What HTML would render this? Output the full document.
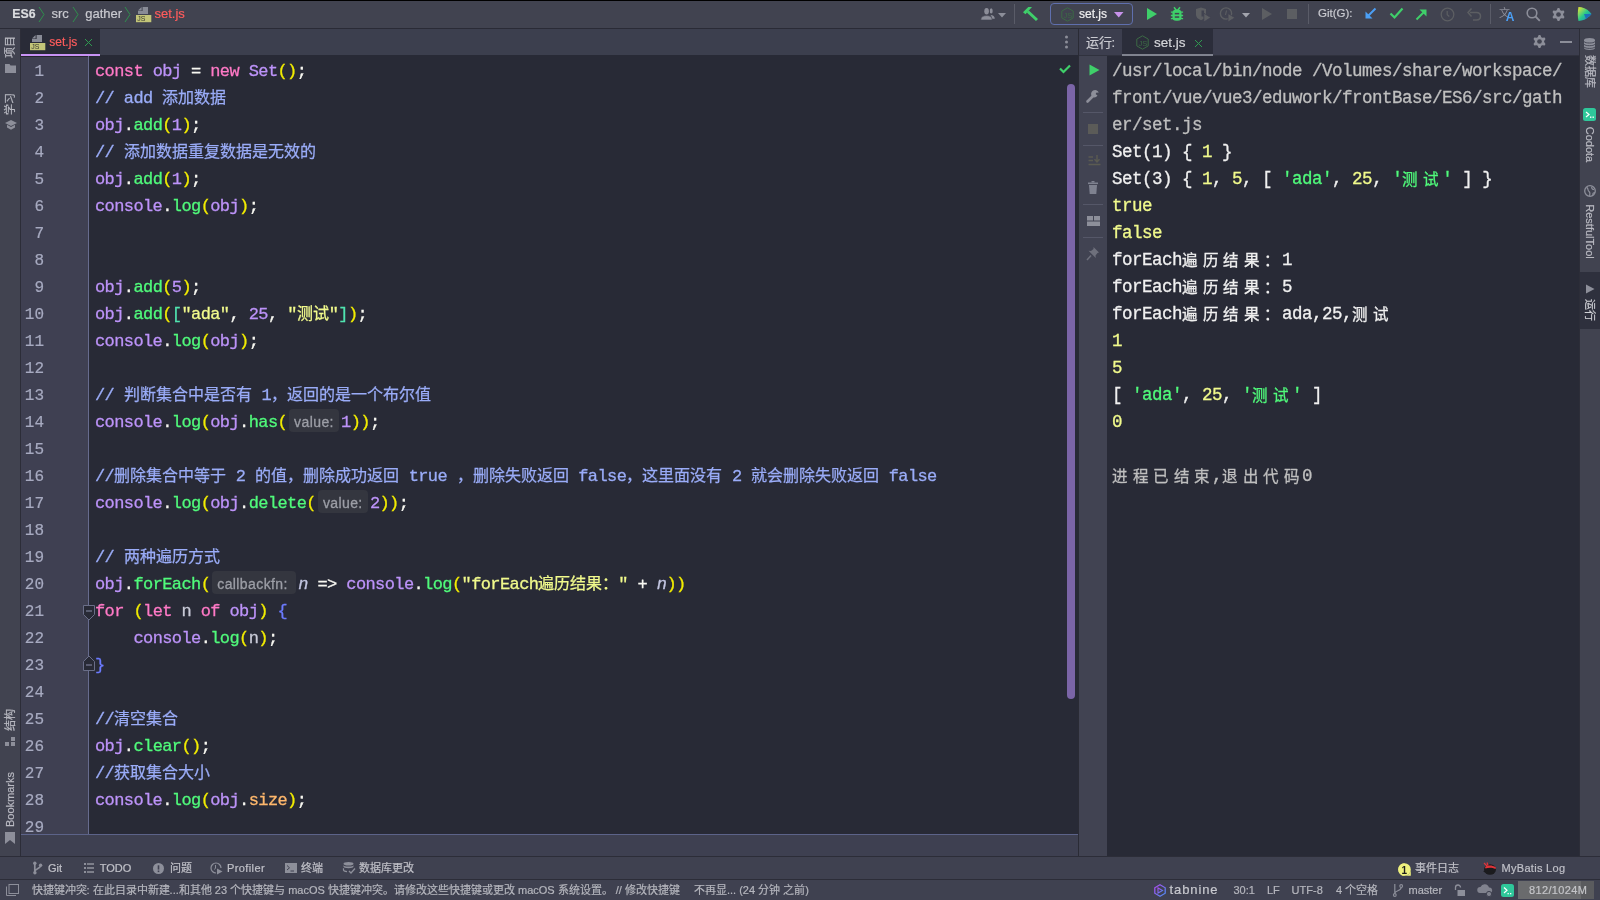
<!DOCTYPE html>
<html lang="zh-CN">
<head>
<meta charset="utf-8">
<style>
*{box-sizing:border-box;margin:0;padding:0}
html,body{width:1600px;height:900px;overflow:hidden;background:#3e4050}
body{position:relative;font-family:"Liberation Sans",sans-serif;color:#c8c9d0}
.a{position:absolute}
.mono{font-family:"Liberation Mono",monospace}
/* panels */
#topline{left:0;top:0;width:1600px;height:1px;background:#000}
#title{left:0;top:1px;width:1600px;height:27px;background:#414350}
#titleb{left:0;top:28px;width:1600px;height:1px;background:#2a2b36}
#lstrip{left:0;top:29px;width:20px;height:827px;background:#414350}
#lstripb{left:20px;top:29px;width:1px;height:827px;background:#2c2d38}
#tabbar{left:21px;top:29px;width:1057px;height:26px;background:#3c3f4e}
#tab{left:21px;top:29px;width:79px;height:25px;background:#292b37}
#tabul{left:21px;top:54px;width:79px;height:2px;background:#c893f5}
#editor{left:21px;top:55px;width:1057px;height:779px;background:#282a36}
#gutter{left:21px;top:56px;width:67px;height:778px;background:#3f4052;border-top:1px solid #25262f}
#gutterl{left:88px;top:56px;width:1px;height:778px;background:#676c8e}
#hscroll{left:21px;top:834px;width:1057px;height:22px;background:#3e4051}
#hscrollb{left:21px;top:834px;width:1057px;height:1px;background:#5c6389}
#vdiv{left:1078px;top:29px;width:1px;height:827px;background:#2a2b35}
#runhead{left:1079px;top:29px;width:500px;height:26px;background:#3c3e4e}
#runheadb{left:1079px;top:55px;width:500px;height:1px;background:#30323e}
#runtool{left:1079px;top:56px;width:28px;height:800px;background:#414352}
#console{left:1107px;top:56px;width:472px;height:800px;background:#282a36}
#rstripb{left:1579px;top:29px;width:1px;height:827px;background:#2c2d38}
#rstrip{left:1580px;top:29px;width:20px;height:827px;background:#414350}
#bbarb{left:0;top:856px;width:1600px;height:1px;background:#2c2d38}
#bbar{left:0;top:857px;width:1600px;height:22px;background:#3f4150}
#sbarb{left:0;top:879px;width:1600px;height:1px;background:#2c2d38}
#sbar{left:0;top:880px;width:1600px;height:20px;background:#3f4150}

/* code */
#code{left:95px;top:58px;width:980px;font-size:17px;letter-spacing:-0.6px;line-height:27px;color:#f8f8f2;white-space:pre;-webkit-text-stroke:0.3px currentColor}
.ln{height:27px;white-space:pre}
.cj{display:inline-block;white-space:nowrap;letter-spacing:0;font-size:16px;-webkit-text-stroke:0.25px currentColor}
.cj2{display:inline-block;white-space:nowrap;font-size:15.5px;letter-spacing:4.5px;vertical-align:-1px;-webkit-text-stroke:0.3px currentColor}
.k{color:#ff79c6}.v{color:#bd93f9}.f{color:#50fa7b}.p{color:#f2ec00}.w{color:#f8f8f2}
.c{color:#9aacf8}.s{color:#f1fa8c}.n{color:#bd93f9}.b{color:#50e3b0}.br{color:#6c7bff}.o{color:#ffb86c}
.i{color:#c3c6e2;font-style:italic}.g{color:#c9cbd8}
.hint{display:inline-block;position:relative;height:1px}
.hp{position:absolute;left:2px;right:2px;top:-17.5px;height:23px;background:#34363f;border-radius:4px;color:#9c9ea6;font-family:"Liberation Sans",sans-serif;font-size:14px;line-height:26px;padding-left:5px;letter-spacing:0.4px}
#nums{left:20px;top:58.5px;width:24px;font-size:16px;-webkit-text-stroke:0.2px currentColor;line-height:27px;color:#a7aac0;text-align:right}
.num{height:27px}
/* console */
#con{left:1112px;top:57.5px;width:470px;font-size:17.5px;letter-spacing:-0.5px;-webkit-text-stroke:0.3px currentColor;line-height:27px;white-space:pre}
.cl{height:27px}
.cg{color:#bfbfbf}.cw{color:#f0f0f0}.cy{color:#f1fa8c}.cs{color:#50fa7b}
.t{line-height:1;white-space:pre;-webkit-text-stroke:0.2px currentColor}
svg{overflow:visible}
</style>
</head>
<body>
<div id="root" style="position:absolute;left:0;top:0;width:1600px;height:900px;will-change:transform">
<div class="a" id="topline"></div>
<div class="a" id="title"></div>
<div class="a" id="titleb"></div>
<div class="a" id="lstrip"></div>
<div class="a" id="lstripb"></div>
<div class="a" id="tabbar"></div>
<div class="a" id="tab"></div>
<div class="a" id="editor"></div>
<div class="a" id="gutter"></div>
<div class="a" id="gutterl"></div>
<div class="a" id="tabul"></div>
<div class="a" id="hscroll"></div>
<div class="a" id="hscrollb"></div>
<div class="a" id="vdiv"></div>
<div class="a" id="runhead"></div>
<div class="a" id="runheadb"></div>
<div class="a" id="runtool"></div>
<div class="a" id="console"></div>
<div class="a" id="rstripb"></div>
<div class="a" id="rstrip"></div>
<div class="a" id="bbarb"></div>
<div class="a" id="bbar"></div>
<div class="a" id="sbarb"></div>
<div class="a" id="sbar"></div>
<div class="a mono" id="code"><div class="ln"><span class="k">const</span><span class="w"> </span><span class="v">obj</span><span class="w"> = </span><span class="k">new</span><span class="w"> </span><span class="v">Set</span><span class="p">()</span><span class="w">;</span></div><div class="ln"><span class="c">// add <span class="cj" style="width:64px">添加数据</span></span></div><div class="ln"><span class="v">obj</span><span class="w">.</span><span class="f">add</span><span class="p">(</span><span class="n">1</span><span class="p">)</span><span class="w">;</span></div><div class="ln"><span class="c">// <span class="cj" style="width:192px">添加数据重复数据是无效的</span></span></div><div class="ln"><span class="v">obj</span><span class="w">.</span><span class="f">add</span><span class="p">(</span><span class="n">1</span><span class="p">)</span><span class="w">;</span></div><div class="ln"><span class="v">console</span><span class="w">.</span><span class="f">log</span><span class="p">(</span><span class="v">obj</span><span class="p">)</span><span class="w">;</span></div><div class="ln">&#8203;</div><div class="ln">&#8203;</div><div class="ln"><span class="v">obj</span><span class="w">.</span><span class="f">add</span><span class="p">(</span><span class="n">5</span><span class="p">)</span><span class="w">;</span></div><div class="ln"><span class="v">obj</span><span class="w">.</span><span class="f">add</span><span class="p">(</span><span class="b">[</span><span class="s">&quot;ada&quot;</span><span class="w">, </span><span class="n">25</span><span class="w">, </span><span class="s">&quot;<span class="cj" style="width:32px">测试</span>&quot;</span><span class="b">]</span><span class="p">)</span><span class="w">;</span></div><div class="ln"><span class="v">console</span><span class="w">.</span><span class="f">log</span><span class="p">(</span><span class="v">obj</span><span class="p">)</span><span class="w">;</span></div><div class="ln">&#8203;</div><div class="ln"><span class="c">// <span class="cj" style="width:128px">判断集合中是否有</span> 1<span class="cj" style="width:160px">，返回的是一个布尔值</span></span></div><div class="ln"><span class="v">console</span><span class="w">.</span><span class="f">log</span><span class="p">(</span><span class="v">obj</span><span class="w">.</span><span class="f">has</span><span class="p">(</span><span class="hint" style="width:54px"><span class="hp">value:</span></span><span class="n">1</span><span class="p">))</span><span class="w">;</span></div><div class="ln">&#8203;</div><div class="ln"><span class="c">//<span class="cj" style="width:112px">删除集合中等于</span> 2 <span class="cj" style="width:144px">的值，删除成功返回</span> true <span class="cj" style="width:112px">，删除失败返回</span> false<span class="cj" style="width:96px">，这里面没有</span> 2 <span class="cj" style="width:128px">就会删除失败返回</span> false</span></div><div class="ln"><span class="v">console</span><span class="w">.</span><span class="f">log</span><span class="p">(</span><span class="v">obj</span><span class="w">.</span><span class="f">delete</span><span class="p">(</span><span class="hint" style="width:54px"><span class="hp">value:</span></span><span class="n">2</span><span class="p">))</span><span class="w">;</span></div><div class="ln">&#8203;</div><div class="ln"><span class="c">// <span class="cj" style="width:96px">两种遍历方式</span></span></div><div class="ln"><span class="v">obj</span><span class="w">.</span><span class="f">forEach</span><span class="p">(</span><span class="hint" style="width:88px"><span class="hp">callbackfn:</span></span><span class="i">n</span><span class="w"> =&gt; </span><span class="v">console</span><span class="w">.</span><span class="f">log</span><span class="p">(</span><span class="s">&quot;forEach<span class="cj" style="width:80px">遍历结果：</span>&quot;</span><span class="w"> + </span><span class="i">n</span><span class="p">))</span></div><div class="ln"><span class="k">for</span><span class="w"> </span><span class="p">(</span><span class="k">let</span><span class="w"> </span><span class="g">n</span><span class="w"> </span><span class="k">of</span><span class="w"> </span><span class="v">obj</span><span class="p">)</span><span class="w"> </span><span class="br">{</span></div><div class="ln"><span class="w">    </span><span class="v">console</span><span class="w">.</span><span class="f">log</span><span class="p">(</span><span class="g">n</span><span class="p">)</span><span class="w">;</span></div><div class="ln"><span class="br">}</span></div><div class="ln">&#8203;</div><div class="ln"><span class="c">//<span class="cj" style="width:64px">清空集合</span></span></div><div class="ln"><span class="v">obj</span><span class="w">.</span><span class="f">clear</span><span class="p">()</span><span class="w">;</span></div><div class="ln"><span class="c">//<span class="cj" style="width:96px">获取集合大小</span></span></div><div class="ln"><span class="v">console</span><span class="w">.</span><span class="f">log</span><span class="p">(</span><span class="v">obj</span><span class="w">.</span><span class="o">size</span><span class="p">)</span><span class="w">;</span></div><div class="ln">&#8203;</div></div>
<div class="a mono" id="nums"><div class="num">1</div><div class="num">2</div><div class="num">3</div><div class="num">4</div><div class="num">5</div><div class="num">6</div><div class="num">7</div><div class="num">8</div><div class="num">9</div><div class="num">10</div><div class="num">11</div><div class="num">12</div><div class="num">13</div><div class="num">14</div><div class="num">15</div><div class="num">16</div><div class="num">17</div><div class="num">18</div><div class="num">19</div><div class="num">20</div><div class="num">21</div><div class="num">22</div><div class="num">23</div><div class="num">24</div><div class="num">25</div><div class="num">26</div><div class="num">27</div><div class="num">28</div><div class="num">29</div></div>
<div class="a mono" id="con"><div class="cl"><span class="cg">/usr/local/bin/node /Volumes/share/workspace/</span></div><div class="cl"><span class="cg">front/vue/vue3/eduwork/frontBase/ES6/src/gath</span></div><div class="cl"><span class="cg">er/set.js</span></div><div class="cl"><span class="cw">Set(1) { </span><span class="cy">1</span><span class="cw"> }</span></div><div class="cl"><span class="cw">Set(3) { </span><span class="cy">1</span><span class="cw">, </span><span class="cy">5</span><span class="cw">, [ </span><span class="cs">&#x27;ada&#x27;</span><span class="cw">, </span><span class="cy">25</span><span class="cw">, </span><span class="cs">&#x27;<span class="cj2" style="width:40px">测试</span>&#x27;</span><span class="cw"> ] }</span></div><div class="cl"><span class="cy">true</span></div><div class="cl"><span class="cy">false</span></div><div class="cl"><span class="cw">forEach<span class="cj2" style="width:100px">遍历结果：</span>1</span></div><div class="cl"><span class="cw">forEach<span class="cj2" style="width:100px">遍历结果：</span>5</span></div><div class="cl"><span class="cw">forEach<span class="cj2" style="width:100px">遍历结果：</span>ada,25,<span class="cj2" style="width:40px">测试</span></span></div><div class="cl"><span class="cy">1</span></div><div class="cl"><span class="cy">5</span></div><div class="cl"><span class="cw">[ </span><span class="cs">&#x27;ada&#x27;</span><span class="cw">, </span><span class="cy">25</span><span class="cw">, </span><span class="cs">&#x27;<span class="cj2" style="width:40px">测试</span>&#x27;</span><span class="cw"> ]</span></div><div class="cl"><span class="cy">0</span></div><div class="cl">&#8203;</div><div class="cl"><span class="cg"><span class="cj2" style="width:100px">进程已结束</span>,<span class="cj2" style="width:80px">退出代码</span>0</span></div></div>
<div class="a t " style="left:12.3px;top:7.89px;font-size:12.3px;color:#dcdde0;font-weight:bold;">ES6</div>
<svg class="a" style="left:38px;top:6px;" width="8" height="17" viewBox="0 0 8 17"><path d="M1 1L6 8.5L1 16" fill="none" stroke="#2f8f4d" stroke-width="1"/></svg>
<svg class="a" style="left:72px;top:6px;" width="8" height="17" viewBox="0 0 8 17"><path d="M1 1L6 8.5L1 16" fill="none" stroke="#2f8f4d" stroke-width="1"/></svg>
<svg class="a" style="left:124px;top:6px;" width="8" height="17" viewBox="0 0 8 17"><path d="M1 1L6 8.5L1 16" fill="none" stroke="#2f8f4d" stroke-width="1"/></svg>
<div class="a t " style="left:51.4px;top:7.30px;font-size:13px;color:#c9cad0;font-weight:normal;">src</div>
<div class="a t " style="left:85.3px;top:7.30px;font-size:13px;color:#c9cad0;font-weight:normal;">gather</div>
<svg class="a" style="left:136px;top:6.8px;" width="16" height="16" viewBox="0 0 16 16"><path d="M6.6 0H12V7H2V4H6.6Z" fill="#888b96"/><path d="M2 3.4L5.6 0V3.4Z" fill="#888b96"/><rect x="0" y="8" width="15.3" height="7.2" fill="#c3c578"/><text x="1.3" y="14" font-family="Liberation Sans" font-size="7" fill="#3a3b30">JS</text></svg>
<div class="a t " style="left:154.5px;top:7.30px;font-size:13px;color:#ff5c5c;font-weight:normal;">set.js</div>
<svg class="a" style="left:980px;top:7px;" width="16" height="14" viewBox="0 0 16 14"><ellipse cx="11.2" cy="3.9" rx="1.5" ry="2.6" fill="#8c8e99"/><path d="M10.5 8C13 8.3 14.8 9.3 14.8 11.8H12C12 10 11.3 8.8 10.5 8Z" fill="#8c8e99"/><ellipse cx="6.6" cy="4.3" rx="2.9" ry="3.5" fill="#414350"/><ellipse cx="6.6" cy="4.3" rx="2.3" ry="3.2" fill="#8c8e99"/><path d="M0.8 13C0.8 9.8 3.5 8.6 6.6 8.6S12.2 9.8 12.2 13Z" fill="#8c8e99" stroke="#414350" stroke-width="0.6"/></svg>
<svg class="a" style="left:998px;top:12.5px;" width="8" height="5" viewBox="0 0 8 5"><path d="M0 0H8L4 4.5Z" fill="#8c8e99"/></svg>
<div class="a" style="left:1014px;top:4px;width:1px;height:20px;background:#5a5c68;"></div>
<svg class="a" style="left:1022px;top:6px;" width="17" height="16" viewBox="0 0 17 16"><path d="M1 6.3L6.3 1H10L3.5 8.3Z" fill="#3fcf6a"/><path d="M5.8 5.5L15 14" stroke="#3fcf6a" stroke-width="3"/></svg>
<div class="a" style="left:1050px;top:3px;width:83px;height:22px;border:1px solid #5f6fad;border-radius:4px"></div>
<svg class="a" style="left:1060.5px;top:6.5px;" width="13" height="15" viewBox="0 0 13 15"><path d="M6.5 0.8L12.2 4.1V10.9L6.5 14.2L0.8 10.9V4.1Z" fill="none" stroke="#3c6a45" stroke-width="1"/><text x="2.6" y="10.8" font-family="Liberation Sans" font-size="7.5" fill="#3c6a45">JS</text></svg>
<div class="a t " style="left:1079px;top:8.44px;font-size:12px;color:#f0f0f0;font-weight:normal;-webkit-text-stroke:0.2px #f0f0f0">set.js</div>
<svg class="a" style="left:1114px;top:12px;" width="10" height="6" viewBox="0 0 10 6"><path d="M0 0H9.5L4.75 5.5Z" fill="#c792ea"/></svg>
<svg class="a" style="left:1146px;top:7px;" width="12" height="14" viewBox="0 0 12 14"><path d="M1 1L11 7L1 13Z" fill="#3fcf6a"/></svg>
<svg class="a" style="left:1170px;top:6px;" width="14" height="16" viewBox="0 0 14 16"><path d="M4 1.3L6.3 4.2M10 1.3L7.7 4.2" stroke="#3fcf6a" stroke-width="1.5"/><rect x="2.5" y="3.6" width="9" height="11.2" rx="3.6" fill="#3fcf6a"/><path d="M0.9 6.1H13.1M0.9 9.5H13.1M0.9 12.6H13.1" stroke="#3fcf6a" stroke-width="1.4"/><rect x="4.8" y="6.9" width="4.4" height="1.5" fill="#414350"/><rect x="4.8" y="10.3" width="4.4" height="1.5" fill="#414350"/></svg>
<svg class="a" style="left:1195px;top:7px;" width="17" height="16" viewBox="0 0 17 16"><path d="M1 2L6 0.6L11 2V7.5C11 10.5 8.5 12.3 6 13.2C3.5 12.3 1 10.5 1 7.5Z" fill="#5c5e62"/><path d="M6.5 3.5H9V9.5H6.5Z" fill="#414350"/><path d="M8.8 6.2L15.8 10.6L8.8 15Z" fill="#5c5e62" stroke="#414350" stroke-width="0.8"/></svg>
<svg class="a" style="left:1219px;top:7px;" width="17" height="16" viewBox="0 0 17 16"><circle cx="7" cy="6.5" r="5.6" fill="none" stroke="#5c5e62" stroke-width="1.4"/><path d="M7.5 3.5L6.5 8" stroke="#5c5e62" stroke-width="1.1" fill="none"/><path d="M9 6.5L16 10.75L9 15Z" fill="#5c5e62" stroke="#414350" stroke-width="0.8"/></svg>
<svg class="a" style="left:1242px;top:12.8px;" width="8" height="5" viewBox="0 0 8 5"><path d="M0 0H8L4 4.5Z" fill="#a3a5ae"/></svg>
<svg class="a" style="left:1261px;top:7px;" width="12" height="14" viewBox="0 0 12 14"><path d="M1 1L11 7L1 13Z" fill="#5c5e62"/></svg>
<div class="a" style="left:1287px;top:9px;width:10px;height:10px;background:#5c5e62;"></div>
<div class="a" style="left:1308px;top:4px;width:1px;height:20px;background:#5a5c68;"></div>
<div class="a t " style="left:1318px;top:7.97px;font-size:11.5px;color:#c9cad0;font-weight:normal;">Git(G):</div>
<svg class="a" style="left:1364px;top:7px;" width="13" height="13" viewBox="0 0 13 13"><path d="M11.5 1.5L3 10" stroke="#4b9ff5" stroke-width="2"/><path d="M1.5 4.5V11.5H8.5Z" fill="#4b9ff5"/></svg>
<svg class="a" style="left:1389px;top:7px;" width="15" height="13" viewBox="0 0 15 13"><path d="M1.5 6.5L5.5 10.5L13.5 1.5" fill="none" stroke="#3fcf6a" stroke-width="2.2"/></svg>
<svg class="a" style="left:1415px;top:8px;" width="13" height="13" viewBox="0 0 13 13"><path d="M1.5 11.5L10 3" stroke="#3fcf6a" stroke-width="2"/><path d="M4.5 1.5H11.5V8.5Z" fill="#3fcf6a"/></svg>
<svg class="a" style="left:1440px;top:7px;" width="15" height="15" viewBox="0 0 15 15"><circle cx="7.5" cy="7.5" r="6.3" fill="none" stroke="#5c5e62" stroke-width="1.3"/><path d="M7.2 4V7.8L9.3 9.5" stroke="#5c5e62" stroke-width="1.2" fill="none"/></svg>
<svg class="a" style="left:1467px;top:7px;" width="15" height="14" viewBox="0 0 15 14"><path d="M3 5.5H9.5C12 5.5 13.5 7.2 13.5 9.3S12 13 9.5 13H6" fill="none" stroke="#5c5e62" stroke-width="1.5"/><path d="M4.5 1.5L1 5.5L4.5 9.5" fill="none" stroke="#5c5e62" stroke-width="1.5"/></svg>
<div class="a" style="left:1490px;top:4px;width:1px;height:20px;background:#5a5c68;"></div>
<svg class="a" style="left:1498px;top:6px;" width="18" height="16" viewBox="0 0 18 16"><text x="0.5" y="11" font-size="11" fill="#8c8e99">文</text><text x="7.8" y="15.2" font-family="Liberation Sans" font-weight="bold" font-size="12" fill="#4b9ff5">A</text></svg>
<svg class="a" style="left:1526px;top:7px;" width="15" height="15" viewBox="0 0 15 15"><circle cx="6" cy="6" r="4.8" fill="none" stroke="#8c8e99" stroke-width="1.6"/><path d="M9.5 9.5L13.8 13.8" stroke="#8c8e99" stroke-width="1.8"/></svg>
<svg class="a" style="left:1552px;top:7.5px;" width="13" height="13" viewBox="0 0 13 13"><path d="M5.65 0.06L7.35 0.06L8.29 2.18L9.35 2.79L11.66 2.54L12.51 4.01L11.14 5.89L11.14 7.11L12.51 8.99L11.66 10.46L9.35 10.21L8.29 10.82L7.35 12.94L5.65 12.94L4.71 10.82L3.65 10.21L1.34 10.46L0.49 8.99L1.86 7.11L1.86 5.89L0.49 4.01L1.34 2.54L3.65 2.79L4.71 2.18Z" fill="#8c8e99"/><circle cx="6.5" cy="6.5" r="2.34" fill="#414350"/></svg>
<svg class="a" style="left:1577px;top:6px;" width="16" height="16" viewBox="0 0 16 16"><defs><linearGradient id="lg" x1="0" y1="0" x2="1" y2="1"><stop offset="0" stop-color="#f4e830"/><stop offset="0.5" stop-color="#29c98a"/><stop offset="1" stop-color="#1f6fd8"/></linearGradient></defs><path d="M1.5 1C6 1 11 3 14.5 8C11 13 6 15 1.5 15C0.5 10.5 0.5 5.5 1.5 1Z" fill="url(#lg)"/><path d="M7 8L14.5 8L9 13Z" fill="#1d5fc0" opacity="0.8"/></svg>
<svg class="a" style="left:30px;top:35px;" width="16" height="16" viewBox="0 0 16 16"><path d="M6.6 0H12V7H2V4H6.6Z" fill="#888b96"/><path d="M2 3.4L5.6 0V3.4Z" fill="#888b96"/><rect x="0" y="8" width="15.3" height="7.2" fill="#c3c578"/><text x="1.3" y="14" font-family="Liberation Sans" font-size="7" fill="#3a3b30">JS</text></svg>
<div class="a t " style="left:49.3px;top:35.84px;font-size:12px;color:#ff5c5c;font-weight:normal;">set.js</div>
<svg class="a" style="left:83.5px;top:37.5px;" width="9" height="9" viewBox="0 0 9 9"><path d="M1 1L8 8M8 1L1 8" stroke="#2f9a50" stroke-width="1"/></svg>
<svg class="a" style="left:1064px;top:35px;" width="5" height="14" viewBox="0 0 5 14"><circle cx="2.5" cy="2" r="1.5" fill="#8c8e99"/><circle cx="2.5" cy="7" r="1.5" fill="#8c8e99"/><circle cx="2.5" cy="12" r="1.5" fill="#8c8e99"/></svg>
<div class="a t " style="left:1085.6px;top:36.00px;font-size:13px;color:#c9cad0;font-weight:normal;">运行:</div>
<div class="a" style="left:1122px;top:29px;width:91px;height:25px;background:#2b2d3a;"></div>
<div class="a" style="left:1122px;top:54px;width:91px;height:2px;background:#80838f;"></div>
<svg class="a" style="left:1135.5px;top:34.5px;" width="13" height="15" viewBox="0 0 13 15"><path d="M6.5 0.8L12.2 4.1V10.9L6.5 14.2L0.8 10.9V4.1Z" fill="none" stroke="#3c6a45" stroke-width="1"/><text x="2.6" y="10.8" font-family="Liberation Sans" font-size="7.5" fill="#3c6a45">JS</text></svg>
<div class="a t " style="left:1154px;top:35.57px;font-size:13.5px;color:#d4d5d9;font-weight:normal;">set.js</div>
<svg class="a" style="left:1193.5px;top:38.5px;" width="9" height="9" viewBox="0 0 9 9"><path d="M1 1L8 8M8 1L1 8" stroke="#2f9a50" stroke-width="1"/></svg>
<svg class="a" style="left:1533.2px;top:35.2px;" width="13" height="13" viewBox="0 0 13 13"><path d="M5.65 0.06L7.35 0.06L8.29 2.18L9.35 2.79L11.66 2.54L12.51 4.01L11.14 5.89L11.14 7.11L12.51 8.99L11.66 10.46L9.35 10.21L8.29 10.82L7.35 12.94L5.65 12.94L4.71 10.82L3.65 10.21L1.34 10.46L0.49 8.99L1.86 7.11L1.86 5.89L0.49 4.01L1.34 2.54L3.65 2.79L4.71 2.18Z" fill="#8c8e99"/><circle cx="6.5" cy="6.5" r="2.34" fill="#414350"/></svg>
<div class="a" style="left:1560px;top:41px;width:12px;height:2px;background:#8c8e99;"></div>
<div class="a t" style="left:0px;top:42px;width:21px;height:11px;line-height:11px;font-size:11px;color:#b9bac2;text-align:center;transform:rotate(-90deg)">项目</div>
<svg class="a" style="left:5px;top:64px;" width="11" height="9" viewBox="0 0 11 9"><path d="M0 0H4.5L5.5 1.5H11V9H0Z" fill="#8d8f9a"/></svg>
<div class="a t" style="left:0px;top:99px;width:21px;height:11px;line-height:11px;font-size:11px;color:#b9bac2;text-align:center;transform:rotate(-90deg)">学习</div>
<svg class="a" style="left:4.5px;top:120px;" width="12" height="10" viewBox="0 0 12 10"><path d="M6 0L12 3L6 6L0 3Z" fill="#8d8f9a"/><path d="M2 4.8V7.5L6 9.8L10 7.5V4.8L6 7Z" fill="#8d8f9a"/></svg>
<div class="a t" style="left:0px;top:715px;width:21px;height:11px;line-height:11px;font-size:11px;color:#b9bac2;text-align:center;transform:rotate(-90deg)">结构</div>
<svg class="a" style="left:5px;top:737px;" width="10" height="9" viewBox="0 0 10 9"><rect x="0" y="5" width="4" height="4" fill="#8d8f9a"/><rect x="6" y="5" width="4" height="4" fill="#8d8f9a"/><rect x="6" y="0" width="4" height="4" fill="#8d8f9a"/></svg>
<div class="a t" style="left:-18px;top:793.5px;width:57px;height:11px;line-height:11px;font-size:11px;color:#b9bac2;text-align:center;transform:rotate(-90deg)">Bookmarks</div>
<svg class="a" style="left:5px;top:832px;" width="10" height="12" viewBox="0 0 10 12"><path d="M0 0H10V12L5 8L0 12Z" fill="#8d8f9a"/></svg>
<svg class="a" style="left:1584px;top:38px;" width="11" height="12" viewBox="0 0 11 12"><path d="M0 2C0 0.9 2.5 0 5.5 0S11 0.9 11 2V10C11 11.1 8.5 12 5.5 12S0 11.1 0 10Z" fill="#8d8f9a"/><path d="M0 3.6C1 4.6 3 5 5.5 5S10 4.6 11 3.6M0 6.3C1 7.3 3 7.7 5.5 7.7S10 7.3 11 6.3M0 9C1 10 3 10.4 5.5 10.4S10 10 11 9" fill="none" stroke="#414350" stroke-width="0.9"/></svg>
<div class="a t" style="left:1572.8px;top:66px;width:33px;height:11px;line-height:11px;font-size:11px;color:#b9bac2;text-align:center;transform:rotate(90deg)">数据库</div>
<svg class="a" style="left:1583px;top:108px;" width="13" height="13" viewBox="0 0 13 13"><rect x="0" y="0" width="13" height="13" rx="2.5" fill="#2fc79a"/><path d="M3 4L6 6.5L3 9" fill="none" stroke="#fff" stroke-width="1.2"/><rect x="7" y="8.5" width="1.4" height="1.4" fill="#fff"/><rect x="9.5" y="8.5" width="1.4" height="1.4" fill="#fff"/></svg>
<div class="a t" style="left:1570.3px;top:138.5px;width:38px;height:11px;line-height:11px;font-size:11px;color:#b9bac2;text-align:center;transform:rotate(90deg)">Codota</div>
<svg class="a" style="left:1584px;top:185px;" width="12" height="12" viewBox="0 0 12 12"><circle cx="6" cy="6" r="5.3" fill="none" stroke="#8d8f9a" stroke-width="1.3"/><path d="M3 2.5C4.5 4 3.5 5.5 5 6.5S6 9 5.5 11M8 1.5C7 3 8.5 4.5 10 4.5M11 7.5C9.5 7.5 8.5 8.5 9 10" fill="none" stroke="#8d8f9a" stroke-width="1.2"/></svg>
<div class="a t" style="left:1560.55px;top:225.95px;width:57.5px;height:11px;line-height:11px;font-size:11px;color:#b9bac2;text-align:center;transform:rotate(90deg)">RestfulTool</div>
<div class="a" style="left:1580px;top:272px;width:20px;height:57px;background:#2e303d;"></div>
<svg class="a" style="left:1585px;top:284px;" width="10" height="10" viewBox="0 0 10 10"><path d="M1 0.5L9.5 5L1 9.5Z" fill="#8d8f9a"/></svg>
<div class="a t" style="left:1578.55px;top:303.95px;width:21.5px;height:11px;line-height:11px;font-size:11px;color:#d0d1d6;text-align:center;transform:rotate(90deg)">运行</div>
<svg class="a" style="left:1088.5px;top:64px;" width="11" height="12" viewBox="0 0 11 12"><path d="M0.5 0.5L10.5 6L0.5 11.5Z" fill="#3fcf6a"/></svg>
<svg class="a" style="left:1086px;top:88.5px;" width="14" height="14" viewBox="0 0 14 14"><path d="M1.5 12.5L7 7" stroke="#8d8f9a" stroke-width="2.6" stroke-linecap="round"/><path d="M6 7.5A4 4 0 1 1 12.8 3.5L10 3.8L9.8 5.2L11.5 6.5A4 4 0 0 1 6 7.5Z" fill="#8d8f9a"/></svg>
<div class="a" style="left:1083px;top:112px;width:20px;height:1px;background:#555768;"></div>
<div class="a" style="left:1083px;top:145px;width:20px;height:1px;background:#555768;"></div>
<div class="a" style="left:1083px;top:204px;width:20px;height:1px;background:#555768;"></div>
<div class="a" style="left:1083px;top:237px;width:20px;height:1px;background:#555768;"></div>
<div class="a" style="left:1088px;top:124px;width:10px;height:10px;background:#5b5b58;"></div>
<svg class="a" style="left:1087.5px;top:155px;" width="13" height="12" viewBox="0 0 13 12"><path d="M0.5 2H5M0.5 5.5H5M0.5 9.5H12.5" stroke="#5b5b52" stroke-width="1.4"/><path d="M9 0V6.5M6.5 4.3L9 7L11.5 4.3" fill="none" stroke="#5b5b52" stroke-width="1.4"/></svg>
<svg class="a" style="left:1088px;top:180.5px;" width="10" height="13" viewBox="0 0 10 13"><rect x="0" y="1.5" width="10" height="1.6" fill="#7f8290"/><rect x="3.5" y="0" width="3" height="1.5" fill="#7f8290"/><path d="M1 4H9L8.3 13H1.7Z" fill="#7f8290"/></svg>
<svg class="a" style="left:1086.5px;top:216px;" width="13" height="10" viewBox="0 0 13 10"><rect x="0" y="0" width="6" height="4.5" fill="#8d8f9a"/><rect x="7" y="0" width="6" height="4.5" fill="#8d8f9a"/><rect x="0" y="5.5" width="13" height="4.5" fill="#8d8f9a"/></svg>
<svg class="a" style="left:1086px;top:246px;" width="14" height="15" viewBox="0 0 14 15"><path d="M7.5 1L13 6.5L11.5 7L9.5 9.5L9.8 12L2.5 4.7L5 5L7.5 3Z" fill="#6e707c"/><path d="M5 9.5L1 14" stroke="#6e707c" stroke-width="1.5"/></svg>
<svg class="a" style="left:1059px;top:64px;" width="12" height="10" viewBox="0 0 12 10"><path d="M1 4.5L4.5 8L11 1.5" fill="none" stroke="#3fcf6a" stroke-width="2.2"/></svg>
<div class="a" style="left:1067px;top:84px;width:8px;height:615px;background:#7b65a7;border-radius:4px"></div>
<svg class="a" style="left:82.5px;top:604.5px;" width="12" height="16" viewBox="0 0 12 16"><path d="M0.5 0.5H11.5V9.5L6 15L0.5 9.5Z" fill="#282a36" stroke="#6a6e88" stroke-width="1"/><path d="M3 6H9" stroke="#7a7e98" stroke-width="1.2"/></svg>
<svg class="a" style="left:82.5px;top:655px;" width="12" height="16" viewBox="0 0 12 16"><path d="M0.5 15.5H11.5V6.5L6 1L0.5 6.5Z" fill="#282a36" stroke="#6a6e88" stroke-width="1"/><path d="M3 10H9" stroke="#7a7e98" stroke-width="1.2"/></svg>
<svg class="a" style="left:32px;top:861px;" width="11" height="14" viewBox="0 0 11 14"><circle cx="2.8" cy="2.3" r="1.7" fill="#8d8f9a"/><circle cx="2.9" cy="11.8" r="1.7" fill="#8d8f9a"/><circle cx="8.6" cy="4.3" r="1.7" fill="#8d8f9a"/><path d="M2.8 2.3V11.8M8.6 4.3C8.6 8 2.9 7.5 2.9 10.5" fill="none" stroke="#8d8f9a" stroke-width="1.7"/></svg>
<div class="a t " style="left:48px;top:862.69px;font-size:11px;color:#c0c1c8;font-weight:normal;">Git</div>
<svg class="a" style="left:84px;top:863px;" width="10" height="10" viewBox="0 0 10 10"><rect x="0" y="0" width="2" height="2" fill="#8d8f9a"/><rect x="3" y="0.2" width="7" height="1.6" fill="#8d8f9a"/><rect x="0" y="4" width="2" height="2" fill="#8d8f9a"/><rect x="3" y="4.2" width="7" height="1.6" fill="#8d8f9a"/><rect x="0" y="8" width="2" height="2" fill="#8d8f9a"/><rect x="3" y="8.2" width="7" height="1.6" fill="#8d8f9a"/></svg>
<div class="a t " style="left:99.7px;top:862.69px;font-size:11px;color:#c0c1c8;font-weight:normal;">TODO</div>
<svg class="a" style="left:153px;top:862.5px;" width="11" height="11" viewBox="0 0 11 11"><circle cx="5.5" cy="5.5" r="5.5" fill="#8d8f9a"/><rect x="4.7" y="2.3" width="1.6" height="4.3" fill="#3f4150"/><rect x="4.7" y="7.5" width="1.6" height="1.6" fill="#3f4150"/></svg>
<div class="a t " style="left:169.5px;top:862.69px;font-size:11px;color:#c0c1c8;font-weight:normal;">问题</div>
<svg class="a" style="left:210px;top:861.5px;" width="13" height="13" viewBox="0 0 13 13"><path d="M6 11A5 5 0 1 1 11 6" fill="none" stroke="#8d8f9a" stroke-width="1.2"/><path d="M5.5 3V6L4.5 7.5" fill="none" stroke="#8d8f9a" stroke-width="1"/><path d="M7 6.5L12.5 9.5L7 12.5Z" fill="#8d8f9a"/></svg>
<div class="a t " style="left:227px;top:862.69px;font-size:11px;color:#c0c1c8;font-weight:normal;letter-spacing:0.4px">Profiler</div>
<svg class="a" style="left:284.5px;top:862.5px;" width="12" height="10" viewBox="0 0 12 10"><rect x="0" y="0" width="12" height="10" fill="#8d8f9a"/><path d="M2 2.5L4.5 4.8L2 7" fill="none" stroke="#3f4150" stroke-width="1"/><path d="M5.5 8H9" stroke="#3f4150" stroke-width="1"/></svg>
<div class="a t " style="left:300.5px;top:862.69px;font-size:11px;color:#c0c1c8;font-weight:normal;">终端</div>
<svg class="a" style="left:342.5px;top:861.5px;" width="12" height="12" viewBox="0 0 12 12"><ellipse cx="5.5" cy="1.8" rx="5" ry="1.8" fill="#8d8f9a"/><path d="M0.5 3V4.6C0.5 5.5 2.5 6.3 5.5 6.3S10.5 5.5 10.5 4.6V3C10.5 4 8.5 4.6 5.5 4.6S0.5 4 0.5 3Z" fill="#8d8f9a"/><path d="M0.5 6.3V8C0.5 8.8 2 9.4 4 9.6" fill="none" stroke="#8d8f9a" stroke-width="1.2"/><path d="M6 9L8 11L12 6.5" fill="none" stroke="#8d8f9a" stroke-width="1.3"/></svg>
<div class="a t " style="left:359px;top:862.69px;font-size:11px;color:#c0c1c8;font-weight:normal;">数据库更改</div>
<svg class="a" style="left:1398px;top:862.5px;" width="13" height="13" viewBox="0 0 13 13"><path d="M6.5 0.2A6.3 6.3 0 1 0 12.8 6.5V12.8H6.5" fill="#eef07e"/><circle cx="6.5" cy="6.5" r="6.3" fill="#eef07e"/><text x="3.6" y="10.6" font-family="Liberation Sans" font-weight="bold" font-size="10" fill="#1d1d1a">1</text></svg>
<div class="a t " style="left:1415px;top:862.69px;font-size:11px;color:#c0c1c8;font-weight:normal;">事件日志</div>
<svg class="a" style="left:1481.5px;top:861px;" width="15" height="14" viewBox="0 0 15 14"><ellipse cx="8" cy="8.5" rx="6" ry="5.2" fill="#1b1b1e"/><path d="M3 6C6 4 10 4 14 6.5L13.5 8C10 6.2 6 6.5 3.5 7.5Z" fill="#e0343a"/><path d="M2 2L5 5M5 1.5L6 4.5" stroke="#e0343a" stroke-width="1.2"/><path d="M1 10L4 9.5L3.5 12Z" fill="#1b1b1e"/></svg>
<div class="a t " style="left:1501.5px;top:862.69px;font-size:11px;color:#c0c1c8;font-weight:normal;letter-spacing:0.3px">MyBatis Log</div>
<svg class="a" style="left:6px;top:884px;" width="13" height="12" viewBox="0 0 13 12"><rect x="3" y="0.5" width="9.5" height="9" fill="none" stroke="#8d8f9a" stroke-width="1"/><path d="M0.5 2.5V11.5H10" fill="none" stroke="#8d8f9a" stroke-width="1"/></svg>
<div class="a t " style="left:31.5px;top:884.99px;font-size:11px;color:#b5b6bd;font-weight:normal;">快捷键冲突: 在此目录中新建...和其他 23 个快捷键与 macOS 快捷键冲突。请修改这些快捷键或更改 macOS 系统设置。 // 修改快捷键&#8195; 不再显... (24 分钟 之前)</div>
<svg class="a" style="left:1153.5px;top:883.5px;" width="12" height="13" viewBox="0 0 12 13"><defs><linearGradient id="tg" x1="0" y1="0" x2="1" y2="1"><stop offset="0" stop-color="#b04bf0"/><stop offset="1" stop-color="#4a8ff0"/></linearGradient></defs><path d="M6 0.8L11.2 3.8V9.2L6 12.2L0.8 9.2V3.8Z" fill="none" stroke="url(#tg)" stroke-width="1.3"/><path d="M4 4V9L8.5 6.5Z" fill="none" stroke="url(#tg)" stroke-width="1.1"/></svg>
<div class="a t " style="left:1169.5px;top:883.30px;font-size:13px;color:#c8c9cf;font-weight:normal;letter-spacing:0.9px">tabnine</div>
<div class="a t " style="left:1233.4px;top:884.99px;font-size:11px;color:#b5b6bd;font-weight:normal;">30:1</div>
<div class="a t " style="left:1267px;top:884.99px;font-size:11px;color:#b5b6bd;font-weight:normal;">LF</div>
<div class="a t " style="left:1291.6px;top:884.99px;font-size:11px;color:#b5b6bd;font-weight:normal;">UTF-8</div>
<div class="a t " style="left:1336px;top:884.99px;font-size:11px;color:#b5b6bd;font-weight:normal;">4 个空格</div>
<svg class="a" style="left:1393px;top:883.5px;" width="10" height="13" viewBox="0 0 10 13"><circle cx="1.8" cy="11" r="1.4" fill="none" stroke="#8d8f9a" stroke-width="1.1"/><circle cx="8.2" cy="2" r="1.4" fill="none" stroke="#8d8f9a" stroke-width="1.1"/><path d="M1.8 0V9.5M8.2 3.5C8.2 7 1.8 6.5 1.8 9.5" fill="none" stroke="#8d8f9a" stroke-width="1.2"/></svg>
<div class="a t " style="left:1408.5px;top:884.99px;font-size:11px;color:#b5b6bd;font-weight:normal;">master</div>
<svg class="a" style="left:1454px;top:884px;" width="11" height="12" viewBox="0 0 11 12"><path d="M1.5 6V3.5A2.5 2.5 0 0 1 6.5 3.5" fill="none" stroke="#8d8f9a" stroke-width="1.3"/><rect x="3.5" y="6" width="7.5" height="6" fill="#8d8f9a"/></svg>
<svg class="a" style="left:1477px;top:883px;" width="16" height="14" viewBox="0 0 16 14"><path d="M3 10A3 3 0 0 1 3.5 4A4.5 4.5 0 0 1 12 4.5A2.8 2.8 0 0 1 13 10Z" fill="#80828e"/><circle cx="12" cy="11" r="2.6" fill="#80828e" stroke="#3f4150" stroke-width="1"/></svg>
<svg class="a" style="left:1501px;top:884px;" width="13" height="13" viewBox="0 0 13 13"><rect x="0" y="0" width="13" height="13" rx="2.5" fill="#2fc79a"/><path d="M3 3.5L6 6.3L3 9" fill="none" stroke="#fff" stroke-width="1.2"/><rect x="6.5" y="9" width="1.3" height="1.3" fill="#fff"/><rect x="9" y="9" width="1.3" height="1.3" fill="#fff"/></svg>
<div class="a" style="left:1518px;top:880.5px;width:76px;height:18px;background:#5a5b5e;"></div>
<div class="a" style="left:1518px;top:880.5px;width:63px;height:18px;background:#6a6b6d;"></div>
<div class="a t " style="left:1529px;top:884.99px;font-size:11px;color:#c4c5c8;font-weight:normal;letter-spacing:0.35px">812/1024M</div>
</div>
</body>
</html>
